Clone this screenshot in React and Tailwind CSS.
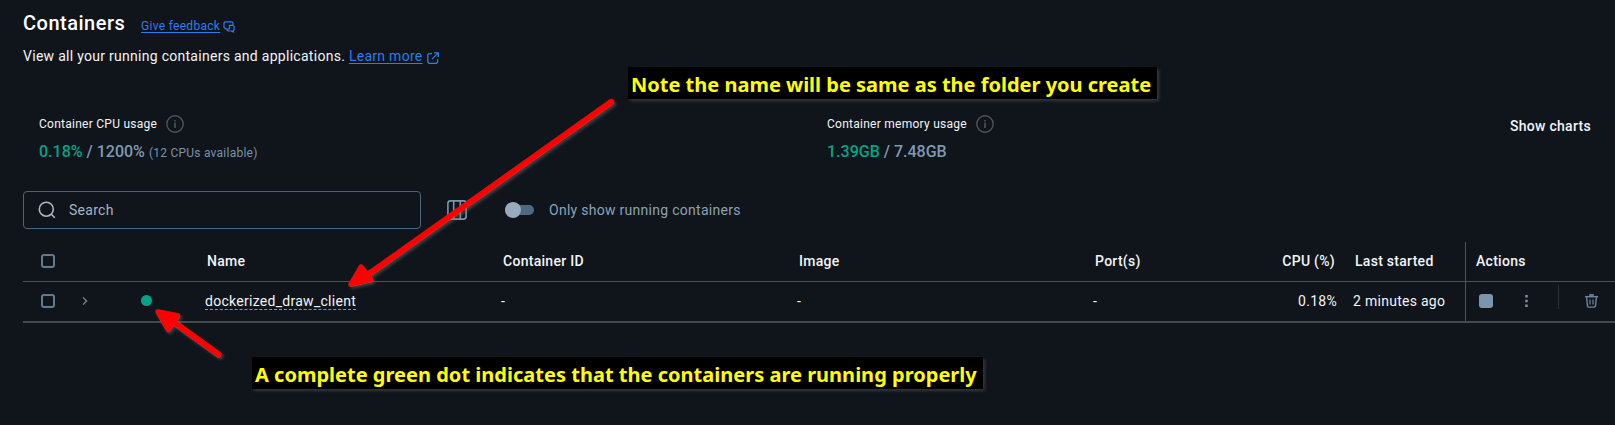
import React from "react";

function InfoIcon() {
  return (
    <svg className="size-[18px] shrink-0" viewBox="0 0 18 18" fill="none" stroke="#505357">
      <circle cx="9" cy="9" r="8.2" strokeWidth="1.4" />
      <path d="M9 5v1.6M9 7.6V13" strokeWidth="1.6" />
    </svg>
  );
}

function FeedbackIcon() {
  return (
    <svg className="ml-[3px] mt-[2px] size-3 shrink-0" viewBox="0 0 12 12" fill="none" stroke="#2a7cf0" strokeWidth="1.2" strokeLinejoin="round">
      <path d="M3.4 8.6L3 7.9 1.9 7.4 1 6.3V2L2 .9h7L10 2v2" />
      <path d="M6.4 4.4H10l1.2 1v3.2l-.9 1v1.5L8.4 10H5.2L4 9.1V8l2.4-.2z" />
    </svg>
  );
}

function ExternalIcon() {
  return (
    <svg className="ml-1 mt-[3px] size-3 shrink-0" viewBox="0 0 12 12" fill="none" stroke="#2a7cf0" strokeWidth="1.3">
      <path d="M5 1.6H2L.8 2.8V10L2 11.3h7.4l1.2-1.2V7.2" />
      <path d="M7.2.8h4.1v4.1M11 1.1L5 7.1" />
    </svg>
  );
}

function ColumnsIcon() {
  return (
    <svg className="size-5 shrink-0" viewBox="0 0 20 20" fill="none" stroke="#7d95aa" strokeWidth="1.6">
      <rect x="0.9" y="0.9" width="18.2" height="18.2" rx="2.6" />
      <path d="M6.7 1v18M13.3 1v18" />
    </svg>
  );
}

function TrashIcon() {
  return (
    <svg className="h-[14px] w-[13px]" viewBox="0 0 13 14" fill="none" stroke="#6d859a">
      <path d="M0 2.7h13" strokeWidth="1.5" />
      <path d="M4.2 1h4.6" strokeWidth="1.8" />
      <path d="M1.6 3.2l.9 8.9 1 1h6l1-1 .9-8.9" strokeWidth="1.4" />
      <path d="M5 5.4v5M8 5.4v5" strokeWidth="1.2" />
    </svg>
  );
}

function Checkbox() {
  return <span className="block size-[14px] rounded-[3px] border-2 border-[#64798b]" />;
}

function Usage({ label, used, total, note }) {
  return (
    <div>
      <div className="flex h-[18px] items-center gap-[9px] text-[12px] tracking-[0.26px] text-[#f2f4f6]">
        <span>{label}</span>
        <InfoIcon />
      </div>
      <div className="mt-[7px] flex h-6 items-baseline text-[16px] leading-6 font-medium tracking-normal text-[#7f99b2]">
        <span className="whitespace-pre">
          <span className="text-[#03a387]">{used}</span> / {total}
        </span>
        {note && <span className="ml-1 text-[12px] font-normal tracking-[0.24px] text-[#7891a9]">{note}</span>}
      </div>
    </div>
  );
}

const columns = "grid grid-cols-[182px_296px_296px_296px_143px_100px_129px_150px]";

function Note({ children }) {
  return (
    <div className="h-8 rounded-[1px] bg-black px-[3px] pt-1 font-['Noto_Sans',sans-serif] text-[20px] leading-[27px] font-bold whitespace-nowrap text-[#ffff00]">
      {children}
    </div>
  );
}

function Arrow({ shaft, head }) {
  return (
    <g stroke="#ff0000" strokeLinecap="round" strokeLinejoin="round" filter="url(#glow)">
      <path d={shaft} strokeWidth="6" fill="none" />
      <path d={head} strokeWidth="4.5" fill="#ff0000" />
    </g>
  );
}

export default function App() {
  return (
    <div className="relative h-[425px] w-[1615px] overflow-hidden bg-[#10151b] pl-[23px] font-[Roboto,sans-serif] text-[14px] tracking-[0.28px] text-[#f2f4f6]">
      <header className="pt-[9px]">
        <div className="flex h-7 items-center">
          <h1 className="w-[118px] text-[20px] leading-7 font-medium tracking-[0.5px] text-white">Containers</h1>
          <a className="mt-[5px] text-[12px] leading-4 tracking-[0.3px] text-[#2a7cf0] underline underline-offset-2">Give feedback</a>
          <div className="mt-[5px]"><FeedbackIcon /></div>
        </div>
        <div className="mt-[9px] flex h-5 items-center leading-5">
          <p className="whitespace-pre">View all your running containers and applications. </p>
          <a className="text-[#2a7cf0] underline underline-offset-2">Learn more</a>
          <ExternalIcon />
        </div>
      </header>

      <section className="mt-[49px] flex pl-4">
        <div className="w-[788px]">
          <Usage label="Container CPU usage" used="0.18%" total="1200%" note="(12 CPUs available)" />
        </div>
        <div className="w-[683px]">
          <Usage label="Container memory usage" used="1.39GB" total="7.48GB" />
        </div>
        <button className="mt-px h-5 leading-5 font-medium">Show charts</button>
      </section>

      <section className="mt-[27px] flex items-center">
        <div className="flex h-[38px] w-[398px] items-center rounded-[4px] border border-[#4b647c] pl-[14px] text-[#a5b4c2]">
          <svg className="size-[18px]" viewBox="0 0 18 18" fill="none" stroke="#a9b8c6" strokeWidth="1.6">
            <circle cx="8.3" cy="8.2" r="7" />
            <path d="M13.3 13.2l3.5 3.6" />
          </svg>
          <span className="ml-[13px]">Search</span>
        </div>
        <div className="ml-[26px]"><ColumnsIcon /></div>
        <div className="ml-[38px] flex h-[10px] w-[29px] items-center rounded-full bg-[#4f6a80]">
          <span className="size-4 shrink-0 rounded-full bg-[#97abbd]" />
        </div>
        <span className="ml-[15px] text-[#8ba2b6]">Only show running containers</span>
      </section>

      <section className="mt-[13px]">
        <div className={`${columns} h-10 items-center border-b border-[#4c5155] font-medium`}>
          <div className="pb-[2px] pl-[18px]"><Checkbox /></div>
          <div className="pb-[2px] pl-[2px]">Name</div>
          <div className="pb-[2px] pl-[2px]">Container ID</div>
          <div className="pb-[2px] pl-[2px]">Image</div>
          <div className="pb-[2px] pl-[2px]">Port(s)</div>
          <div className="pr-px pb-[2px] text-right">CPU (%)</div>
          <div className="pb-[2px] pl-[19px]">Last started</div>
          <div className="flex h-10 items-center border-l border-[#4c5155] pb-[2px] pl-[10px]">Actions</div>
        </div>
        <div className={`${columns} h-[41px] items-center border-b-2 border-[#41494f]`}>
          <div className="flex items-center pb-px pl-[18px]">
            <Checkbox />
            <svg className="ml-[27px] h-2 w-[6px]" viewBox="0 0 6 8" fill="none" stroke="#7288a0" strokeWidth="1.3">
              <path d="M1 .4L4.6 4 1 7.6" />
            </svg>
            <span className="mb-px ml-[53.4px] size-[11px] rounded-full bg-[#02a489]" />
          </div>
          <div>
            <a className="inline-block h-[17px] border-b border-dashed border-[#7f9ab3] leading-[17px]">dockerized_draw_client</a>
          </div>
          <div>-</div>
          <div>-</div>
          <div>-</div>
          <div className="-mr-px text-right">0.18%</div>
          <div className="pl-[17px]">2 minutes ago</div>
          <div className="flex h-[39px] items-center border-l border-[#4c5155] pb-px pl-[13px]">
            <span className="size-[14px] rounded-[3px] bg-[#7b96ac]" />
            <svg className="ml-[31.5px] h-3 w-[3px]" viewBox="0 0 3 12" fill="#7b96ac">
              <path d="M.3 0h2.4v2.4H.3zM.3 4.800h2.400v2.400H.3zM.3 9.600h2.400V12H.3z" />
            </svg>
            <span className="mb-[8px] ml-[30.5px] h-6 w-px bg-[#2b3035]" />
            <div className="ml-[25.5px]"><TrashIcon /></div>
          </div>
        </div>
      </section>

      <svg className="absolute inset-0 h-[425px] w-[1615px]" viewBox="0 0 1615 425">
        <defs>
          <filter id="glow" x="-10%" y="-10%" width="125%" height="125%">
            <feDropShadow dx="2" dy="2" stdDeviation="1.5" floodColor="#6b6b6b" floodOpacity="0.5" />
          </filter>
        </defs>
        <Arrow shaft="M611 102L366 276" head="M350.500 284.500L361 266.500L371 280Z" />
        <Arrow shaft="M218.500 354.500L172 321" head="M157.500 311.500L178 315.500L168 330Z" />
      </svg>

      <div className="absolute left-[628px] top-[67px] w-[529px] tracking-normal shadow-[2px_2px_3px_#34373a]"><Note>Note the name will be same as the folder you create</Note></div>
      <div className="absolute left-[252px] top-[357px] w-[731px] tracking-[0.014px] shadow-[2px_2px_3px_#34373a]"><Note>A complete green dot indicates that the containers are running properly</Note></div>
    </div>
  );
}
